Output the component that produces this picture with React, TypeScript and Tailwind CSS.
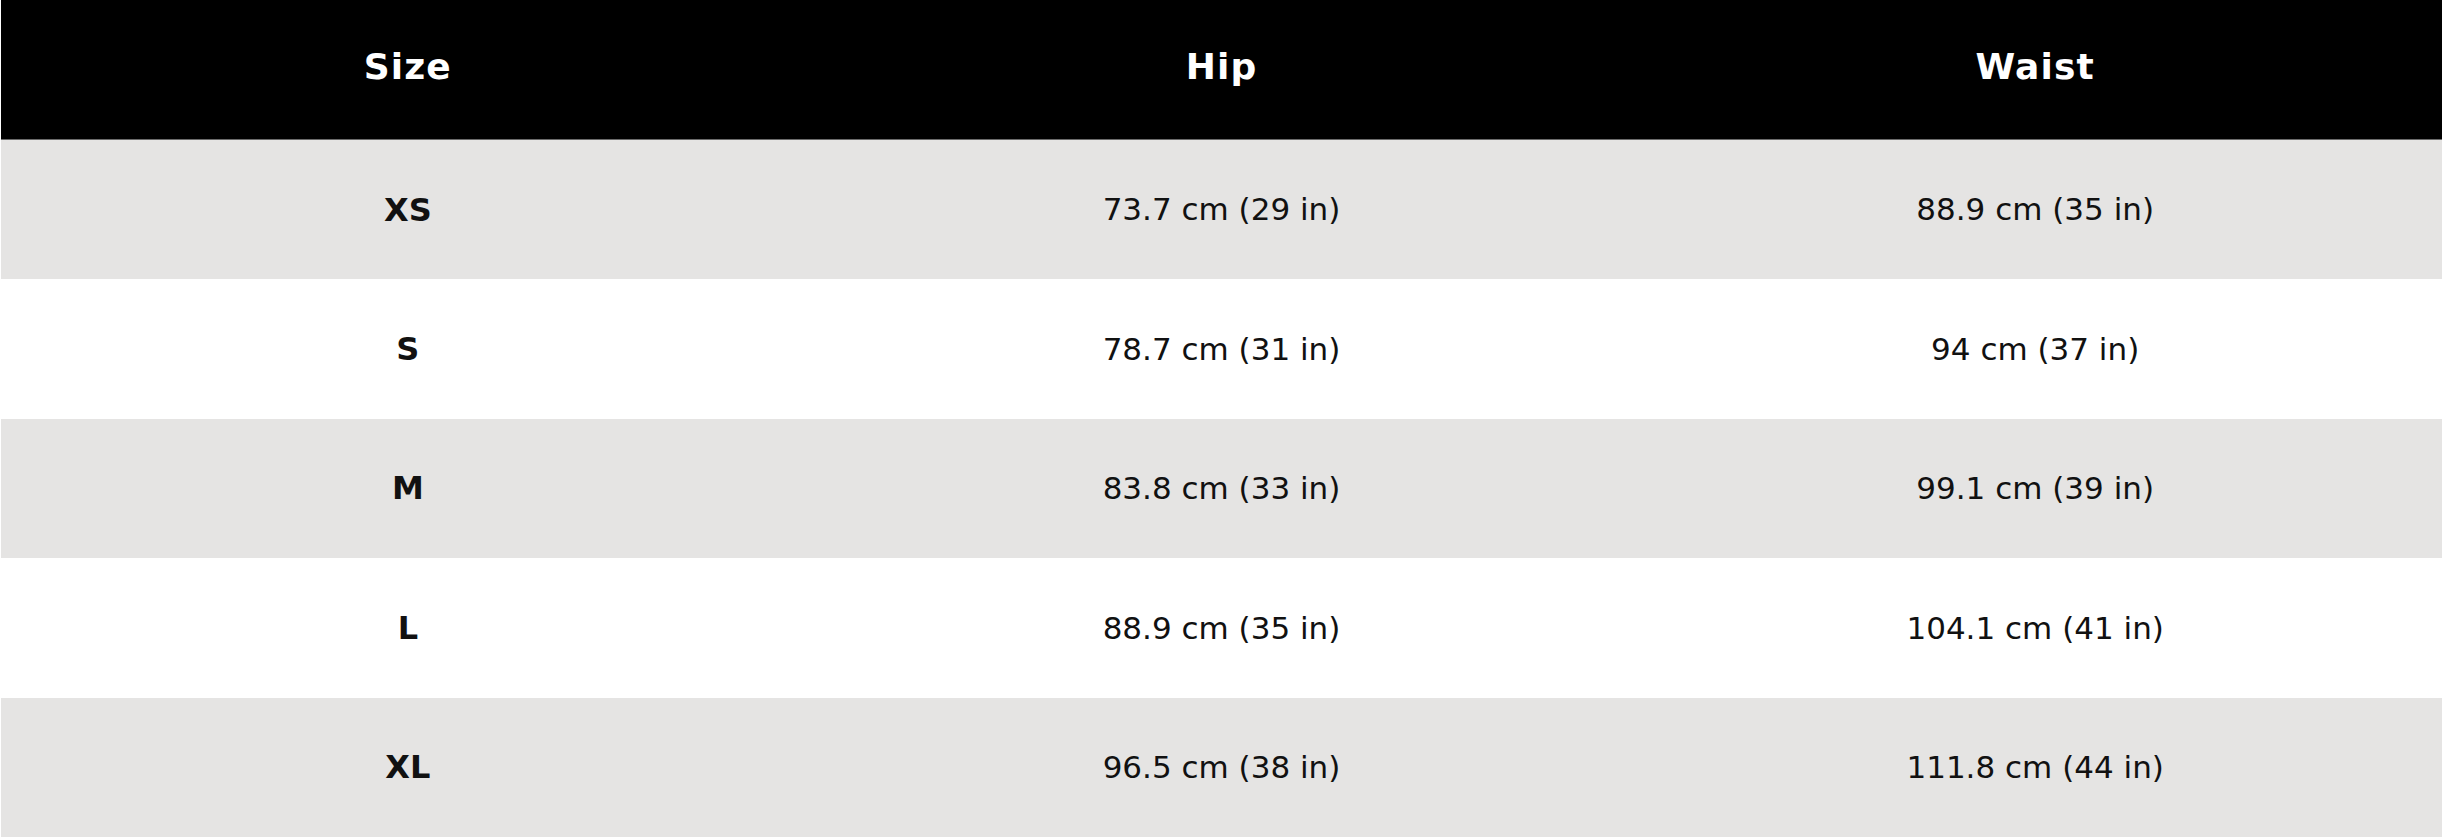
import React from 'react';

interface SizeRow {
  size: string;
  hip: string;
  waist: string;
}

const rows: SizeRow[] = [
  { size: 'XS', hip: '73.7 cm (29 in)', waist: '88.9 cm (35 in)' },
  { size: 'S', hip: '78.7 cm (31 in)', waist: '94 cm (37 in)' },
  { size: 'M', hip: '83.8 cm (33 in)', waist: '99.1 cm (39 in)' },
  { size: 'L', hip: '88.9 cm (35 in)', waist: '104.1 cm (41 in)' },
  { size: 'XL', hip: '96.5 cm (38 in)', waist: '111.8 cm (44 in)' },
];

const headFont = "font-['DejaVu_Sans',sans-serif] font-bold";
const bodyFont = "font-['DejaVu_Sans',sans-serif]";

/**
 * Size chart table (Size / Hip / Waist)
 */
export default function App() {
  return (
    <div className="w-[2446px] h-[838px] bg-white pl-[1px] pr-[4px] pb-[1px]">
      <div className="h-full grid grid-rows-[140px_repeat(5,1fr)]">
        {/* Header */}
        <div className="grid grid-cols-3 bg-black border-b border-[#6b6b6b] text-white">
          {['Size', 'Hip', 'Waist'].map((h) => (
            <div
              key={h}
              className={`flex items-center justify-center pb-[6px] text-[36px] tracking-[0.03em] ${headFont}`}
            >
              {h}
            </div>
          ))}
        </div>

        {/* Rows */}
        {rows.map((r, i) => (
          <div
            key={r.size}
            className={`grid grid-cols-3 text-[#111] ${i % 2 === 0 ? 'bg-[#e5e4e3]' : 'bg-white'}`}
          >
            <div className={`flex items-center justify-center text-[32px] ${headFont}`}>{r.size}</div>
            <div className={`flex items-center justify-center text-[31px] ${bodyFont}`}>{r.hip}</div>
            <div className={`flex items-center justify-center text-[31px] ${bodyFont}`}>{r.waist}</div>
          </div>
        ))}
      </div>
    </div>
  );
}
